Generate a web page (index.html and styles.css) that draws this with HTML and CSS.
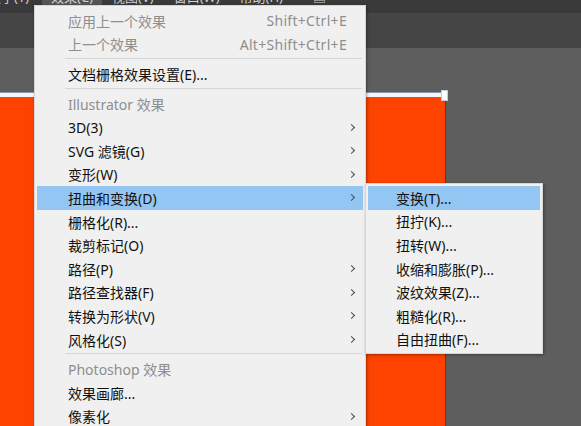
FILE: index.html
```html
<!DOCTYPE html>
<html lang="zh-CN">
<head>
  <meta charset="UTF-8" />
  <title>效果菜单</title>
  <link rel="stylesheet" href="styles.css">
</head>
<body>
  <div class="app">
    <div class="menubar">
      <span class="mb-item">文字(T)</span>
      <span class="mb-item activo">效果(C)</span>
      <span class="mb-item">视图(V)</span>
      <span class="mb-item">窗口(W)</span>
      <span class="mb-item">帮助(H)</span>
      <span class="mb-item icono">▤</span>
    </div>
    <div class="controlbar"></div>
    <div class="canvas">
      <div class="artboard"></div>
      <div class="bbox-line"></div>
      <div class="handle"></div>
    </div>

    <div class="menu principal">
      <div class="fila off"><span>应用上一个效果</span><span class="atajo">Shift+Ctrl+E</span></div>
      <div class="fila off"><span>上一个效果</span><span class="atajo">Alt+Shift+Ctrl+E</span></div>
      <div class="sep"></div>
      <div class="fila"><span>文档栅格效果设置(E)...</span></div>
      <div class="sep"></div>
      <div class="fila off"><span>Illustrator 效果</span></div>
      <div class="fila"><span>3D(3)</span><span class="flecha"></span></div>
      <div class="fila"><span>SVG 滤镜(G)</span><span class="flecha"></span></div>
      <div class="fila"><span>变形(W)</span><span class="flecha"></span></div>
      <div class="fila sel"><span>扭曲和变换(D)</span><span class="flecha"></span></div>
      <div class="fila"><span>栅格化(R)...</span></div>
      <div class="fila"><span>裁剪标记(O)</span></div>
      <div class="fila"><span>路径(P)</span><span class="flecha"></span></div>
      <div class="fila"><span>路径查找器(F)</span><span class="flecha"></span></div>
      <div class="fila"><span>转换为形状(V)</span><span class="flecha"></span></div>
      <div class="fila"><span>风格化(S)</span><span class="flecha"></span></div>
      <div class="sep"></div>
      <div class="fila off"><span>Photoshop 效果</span></div>
      <div class="fila"><span>效果画廊...</span></div>
      <div class="fila"><span>像素化</span><span class="flecha"></span></div>
    </div>

    <div class="menu sub">
      <div class="fila sel"><span>变换(T)...</span></div>
      <div class="fila"><span>扭拧(K)...</span></div>
      <div class="fila"><span>扭转(W)...</span></div>
      <div class="fila"><span>收缩和膨胀(P)...</span></div>
      <div class="fila"><span>波纹效果(Z)...</span></div>
      <div class="fila"><span>粗糙化(R)...</span></div>
      <div class="fila"><span>自由扭曲(F)...</span></div>
    </div>
  </div>
</body>
</html>
```

FILE: styles.css
```css
body {
  margin: 0; padding: 0;
  background: #5e5e5e;
  font-family: "Noto Sans", "Noto Sans CJK SC", sans-serif;
}
.app {
  position: relative;
  width: 581px;
  height: 426px;
  overflow: hidden;
  background: #5e5e5e;
}
.menubar {
  height: 13px;
  background: #3a3a3a;
  display: flex;
  overflow: hidden;
  font-size: 13px;
  color: #d0d0d0;
}
.mb-item {
  line-height: 13px;
  margin-top: -9px;
  padding: 0 10px;
  height: 22px;
}
.mb-item:first-child {
  margin-left: -22px;
}
.mb-item.activo {
  background: #565656;
  padding: 0 9px;
  margin-left: 3px;
}
.mb-item.icono {
  margin-left: 10px;
}
.controlbar {
  height: 35px;
  background: #454545;
}
.canvas {
  position: relative;
  height: 378px;
  background: #5e5e5e;
}
.artboard {
  position: absolute;
  left: 0;
  top: 49px;
  width: 445px;
  bottom: 0;
  background: #fe4200;
  box-shadow: 1px 0 0 #8a2a0c;
}
.bbox-line {
  position: absolute;
  left: 0;
  top: 44px;
  width: 444px;
  height: 4px;
  background: #f4f6fa;
  border-top: 1px solid #8d95b2;
}
.handle {
  position: absolute;
  left: 441px;
  top: 42px;
  width: 5px;
  height: 9px;
  background: #ffffff;
  border: 1px solid #c8cdd8;
}
.menu {
  position: absolute;
  background: #f0f0f0;
  border: 1px solid #d6d6d6;
  box-shadow: 1px 1px 3px rgba(0,0,0,0.35);
  font-size: 14px;
  color: #111;
}
.principal {
  left: 34px;
  top: 5px;
  width: 330px;
  height: 440px;
  padding-top: 3px;
}
.sub {
  left: 365px;
  top: 183px;
  width: 176px;
  padding: 2px 0;
}
.fila {
  height: 23.6px;
  margin: 0 2px;
  padding: 0 7px 0 31px;
  display: flex;
  justify-content: space-between;
  align-items: center;
  white-space: nowrap;
}
.sub .fila {
  padding-left: 28px;
}
.fila.off {
  color: #8e8e8e;
}
.fila.sel {
  background: #93c6f2;
}
.atajo {
  margin-right: 9px;
  letter-spacing: 0.3px;
}
.flecha {
  width: 4px;
  height: 4px;
  border-right: 1px solid #4a4a4a;
  border-top: 1px solid #4a4a4a;
  transform: rotate(45deg);
  margin-right: 2px;
}
.sep {
  height: 1px;
  margin: 2px 3px 3px 30px;
  background: #d6d6d6;
}
```
